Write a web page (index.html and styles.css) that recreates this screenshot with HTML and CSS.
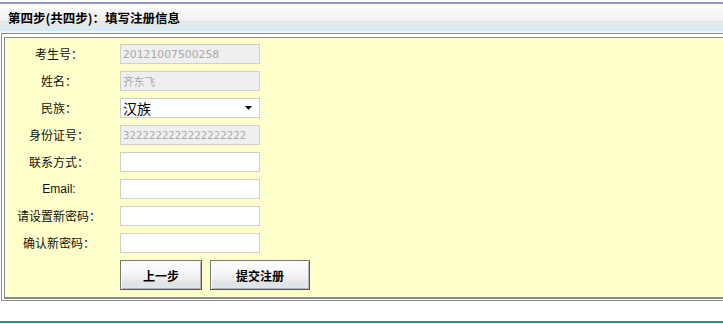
FILE: index.html
```
<!DOCTYPE html>
<html lang="zh-CN">

<head>
    <meta charset="utf-8">
    <title>注册</title>
    <link rel="stylesheet" href="styles.css">
</head>

<body>
    <div class="title">第四步(共四步)：填写注册信息</div>

    <div class="outer">
        <div class="inner">
            <div class="form">
                <label>考生号：</label>
                <input class="field" type="text" value="20121007500258" disabled>

                <label>姓名：</label>
                <input class="field" type="text" value="齐东飞" disabled>

                <label>民族：</label>
                <div class="select">
                    <span>汉族</span>
                    <svg width="7" height="4" viewBox="0 0 7 4"><path d="M0 0h7L3.5 4z" fill="#000"/></svg>
                </div>

                <label>身份证号：</label>
                <input class="field field_id" type="text" value="3222222222222222222" disabled>

                <label>联系方式：</label>
                <input class="field" type="text">

                <label class="latin">Email:</label>
                <input class="field" type="text">

                <label>请设置新密码：</label>
                <input class="field" type="password">

                <label>确认新密码：</label>
                <input class="field" type="password">

                <div class="buttons">
                    <button class="btn btn_back">上一步</button>
                    <button class="btn btn_submit">提交注册</button>
                </div>
            </div>
        </div>
    </div>

    <div class="footer_line"></div>
</body></html>
```

FILE: styles.css
```
* {
    margin: 0;
    padding: 0;
    box-sizing: border-box;
}

body {
    width: 723px;
    height: 324px;
    overflow: hidden;
    background: #fff;
    font-family: "Noto Sans CJK SC", "DejaVu Sans", sans-serif;
    font-size: 12px;
    color: #222;
}

.title {
    margin-top: 2px;
    height: 31px;
    border-top: 2px solid #9494cc;
    padding-left: 8px;
    font-weight: bold;
    font-size: 12.5px;
    line-height: 28px;
    color: #000;
    background: linear-gradient(to bottom,
            #fcfcfc 0px, #f3f3f3 14px, #efefef 17px,
            #cfe8f7 17px, #cfe8f7 18px,
            #e9e9e9 18px, #e6e6e6 23px,
            #d4ebf8 23px, #d4ebf8 27px,
            #f4f4f4 27px);
}

.outer {
    margin-left: 1px;
    width: 740px;
    border: 1px solid #8a8a8a;
    padding: 3px 0 1px 2px;
}

.inner {
    background: #ffffcc;
    border: 1px solid #8a8a8a;
    border-bottom-width: 2px;
    padding: 6px 0 7px 0;
}

.form {
    display: grid;
    grid-template-columns: 108px 1fr;
    column-gap: 7px;
    row-gap: 7px;
    align-items: center;
    justify-items: start;
}

.form label {
    justify-self: stretch;
    text-align: center;
    color: #111;
    line-height: 20px;
}

.form label.latin {
    font-family: "Liberation Sans", sans-serif;
    font-size: 12px;
}

.field {
    width: 140px;
    height: 20px;
    border: 1px solid #cfcfcf;
    background: #fff;
    padding: 0 2px;
    font-family: "DejaVu Sans", "Noto Sans CJK SC", sans-serif;
    font-size: 10.8px;
    color: #a8a8a8;
    outline: none;
}

.field_id {
    font-size: 10.2px;
}

.field:disabled {
    background: #efefef;
    color: #a8a8a8;
}

.select {
    width: 140px;
    height: 20px;
    border: 1px solid #cfcfcf;
    background: #fff;
    display: flex;
    align-items: center;
    justify-content: space-between;
    padding: 0 7px 0 2px;
    font-size: 14px;
    line-height: 18px;
    color: #000;
}

.buttons {
    grid-column: 2;
    display: flex;
    gap: 8px;
}

.btn {
    height: 30px;
    border: 1px solid #777;
    border-right-color: #555;
    border-bottom-color: #555;
    box-shadow: inset 1px 1px #fff, inset -1px -1px #b8b8b8;
    background: linear-gradient(to bottom, #ffffff 0%, #f2f2f2 55%, #e2e2e2 80%, #d6ebf6 100%);
    font-family: "Noto Sans CJK SC", sans-serif;
    font-size: 12px;
    font-weight: bold;
    color: #000;
}

.btn_back {
    width: 82px;
}

.btn_submit {
    width: 100px;
}

.footer_line {
    margin-top: 20px;
    height: 2px;
    background: #3a8b8b;
}
```
